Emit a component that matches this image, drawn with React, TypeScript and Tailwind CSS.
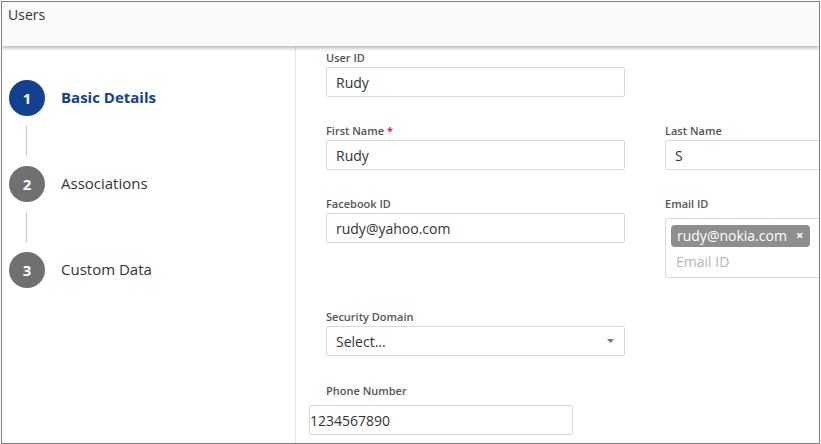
import type { ReactNode } from 'react'

const STEPS = [
  { n: 1, label: 'Basic Details', active: true },
  { n: 2, label: 'Associations', active: false },
  { n: 3, label: 'Custom Data', active: false },
]

function Label({ children, required }: { children: ReactNode; required?: boolean }) {
  return (
    <div className="h-[14px] text-[11px] font-semibold leading-[14px] text-[#555]">
      {children}
      {required && <span className="ml-[3px] text-[#e1001a]">*</span>}
    </div>
  )
}

function TextBox({ value, className = '' }: { value: string; className?: string }) {
  return (
    <div
      className={`flex h-[30px] w-[299px] items-center rounded-[2px] border border-[#d9d9d9] bg-white pl-[9px] text-[14px] text-[#333] ${className}`}
    >
      {value}
    </div>
  )
}

function Stepper() {
  return (
    <div className="flex flex-col pl-[7px] pt-[34px]">
      {STEPS.map((s, i) => (
        <div key={s.n}>
          {i > 0 && (
            <div className="my-[10px] ml-[17px] h-[30px] w-px bg-[#c8c8c8]" />
          )}
          <div className="flex items-center gap-[16px]">
            <div
              className={`flex h-[36px] w-[36px] items-center justify-center rounded-full text-[15px] font-bold text-white ${
                s.active ? 'bg-[#124191]' : 'bg-[#707070]'
              }`}
            >
              {s.n}
            </div>
            <span
              className={`-mt-[2px] text-[15px] ${
                s.active ? 'font-bold text-[#124191]' : 'text-[#333]'
              }`}
            >
              {s.label}
            </span>
          </div>
        </div>
      ))}
    </div>
  )
}

export default function App() {
  return (
    <div className="h-[444px] w-[821px] bg-white pl-px pt-px [font-family:'Open_Sans',sans-serif]">
      <div className="flex h-[443px] w-[819px] flex-col overflow-hidden border border-[#7f7f7f]">
        <div className="relative z-10 h-[44px] shrink-0 bg-[#fafafa] px-[6px] pt-[3px] text-[14px] leading-[20px] text-[#333] shadow-[0_2px_4px_rgba(0,0,0,0.3)]">
          Users
        </div>

        <div className="flex min-h-0 flex-1">
          <div className="w-[294px] shrink-0 border-r border-[#e6e6e6]">
            <Stepper />
          </div>

          <div className="min-w-0 flex-1 overflow-hidden pl-[30px] pt-[5px]">
            {/* row 1 */}
            <Label>User ID</Label>
            <TextBox value="Rudy" className="mt-[2px]" />

            {/* row 2 */}
            <div className="mt-[27px] flex gap-[40px]">
              <div className="shrink-0">
                <Label required>First Name</Label>
                <TextBox value="Rudy" className="mt-[2px]" />
              </div>
              <div className="shrink-0">
                <Label>Last Name</Label>
                <TextBox value="S" className="mt-[2px]" />
              </div>
            </div>

            {/* row 3 */}
            <div className="mt-[27px] flex gap-[40px]">
              <div className="shrink-0">
                <Label>Facebook ID</Label>
                <TextBox value="rudy@yahoo.com" className="mt-[2px]" />
              </div>
              <div className="shrink-0">
                <Label>Email ID</Label>
                <div className="mt-[7px] h-[60px] w-[299px] rounded-[2px] border border-[#d9d9d9] bg-white px-[5px] pt-[4px]">
                  <div className="inline-flex h-[22px] items-center gap-[9px] rounded-[4px] bg-[#8e8e8e] pl-[6px] pr-[7px] text-[14px] text-white">
                    rudy@nokia.com
                    <span className="text-[13px] font-bold leading-none">×</span>
                  </div>
                  <div className="mt-[5px] pl-[5px] text-[14px] leading-[20px] text-[#b5b5b5]">
                    Email ID
                  </div>
                </div>
              </div>
            </div>

            {/* row 4 */}
            <div className="mt-[32px]">
              <Label>Security Domain</Label>
              <div className="mt-[2px] flex h-[30px] w-[299px] items-center justify-between rounded-[2px] border border-[#d9d9d9] bg-white pl-[9px] pr-[10px] text-[14px] text-[#333]">
                Select...
                <svg width="7" height="4" viewBox="0 0 7 4">
                  <path d="M0 0h7L3.5 4z" fill="#777" />
                </svg>
              </div>
            </div>

            {/* row 5 */}
            <div className="mt-[28px]">
              <Label>Phone Number</Label>
              <div className="-ml-[17px] mt-[7px] flex h-[30px] w-[264px] items-center rounded-[2px] border border-[#d9d9d9] bg-white pl-0 text-[14px] text-[#333]">
                1234567890
              </div>
            </div>
          </div>
        </div>
      </div>
    </div>
  )
}
